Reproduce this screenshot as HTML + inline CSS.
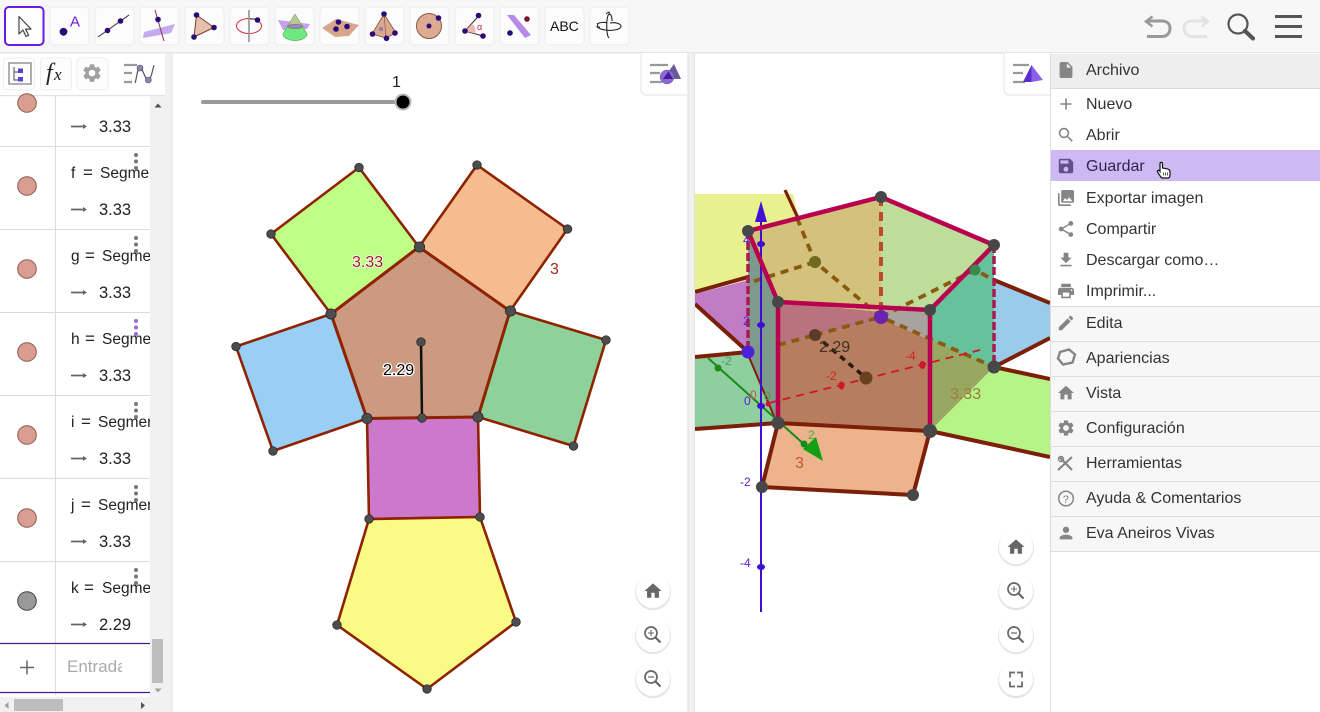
<!DOCTYPE html>
<html lang="es"><head><meta charset="utf-8"><title>GeoGebra</title>
<style>
html,body{margin:0;padding:0;width:1320px;height:712px;overflow:hidden;background:#fff}
svg{display:block}
text{font-family:"Liberation Sans",sans-serif}
.m{font-size:16px;fill:#333}
.a{font-size:15.5px;fill:#222}
.v{font-size:16.500px;fill:#222}
.ic{fill:#858585}
.net{stroke:#8f2200;stroke-width:2.6;stroke-linejoin:round}
.pt{fill:#4d4d4d;stroke:#222;stroke-width:.7}
.e3{stroke:#7c1f08;stroke-width:4;fill:none}
.d3{stroke:#8a5a10;stroke-width:3.8;stroke-dasharray:8 6;fill:none}
.r3{stroke:#b8004f;stroke-width:4.500;fill:none;stroke-linecap:round}
.p3{fill:#474747}
.tb{fill:#fcfcfc;stroke:#ececec;stroke-width:1}
.dot{fill:#2b0a75}
</style></head><body>
<svg width="1320" height="712" viewBox="0 0 1320 712" xmlns="http://www.w3.org/2000/svg">
<defs>
<path id="i-home" d="M10 20v-6h4v6h5v-8h3L12 3 2 12h3v8z"/>
<path id="i-set" d="M19.14 12.94c.04-.3.06-.61.06-.94 0-.32-.02-.64-.07-.94l2.03-1.58c.18-.14.23-.41.12-.61l-1.92-3.32c-.12-.22-.37-.29-.59-.22l-2.39.96c-.5-.38-1.03-.7-1.62-.94l-.36-2.54c-.04-.24-.24-.41-.48-.41h-3.84c-.24 0-.43.17-.47.41l-.36 2.54c-.59.24-1.13.57-1.62.94l-2.39-.96c-.22-.08-.47 0-.59.22L2.74 8.87c-.12.21-.08.47.12.61l2.03 1.58c-.05.3-.09.63-.09.94s.02.64.07.94l-2.03 1.58c-.18.14-.23.41-.12.61l1.92 3.32c.12.22.37.29.59.22l2.39-.96c.5.38 1.03.7 1.62.94l.36 2.54c.05.24.24.41.48.41h3.84c.24 0 .44-.17.47-.41l.36-2.54c.59-.24 1.13-.56 1.62-.94l2.39.96c.22.08.47 0 .59-.22l1.92-3.32c.12-.22.07-.47-.12-.61l-2.01-1.58zM12 15.6c-1.98 0-3.6-1.62-3.6-3.6s1.62-3.6 3.6-3.6 3.6 1.62 3.6 3.6-1.62 3.6-3.6 3.6z"/>
<g id="btn"><circle r="18" fill="#000" opacity=".1" cy="1.2"/><circle r="17" fill="#fff"/></g>
<g id="zin"><circle cx="-2" cy="-2" r="6" fill="none" stroke="#666" stroke-width="1.7"/><path d="M2.4 2.4L7.5 7.5" stroke="#666" stroke-width="2.2"/><path d="M-5-2h6M-2-5v6" stroke="#666" stroke-width="1.1"/></g>
<g id="zout"><circle cx="-2" cy="-2" r="6" fill="none" stroke="#666" stroke-width="1.7"/><path d="M2.4 2.4L7.5 7.5" stroke="#666" stroke-width="2.2"/><path d="M-5-2h6" stroke="#666" stroke-width="1.2"/></g>
<clipPath id="clipA"><rect x="56" y="96" width="94" height="600"/></clipPath>
<clipPath id="clipE"><rect x="60" y="650" width="62" height="35"/></clipPath>
<clipPath id="clip3"><rect x="695" y="96" width="355" height="616"/></clipPath>
</defs>

<!-- toolbar -->
<rect width="1320" height="52" fill="#f7f7f7"/>
<rect y="52" width="1320" height="1.5" fill="#e4e4e4"/>
<g>
<rect class="tb" x="50" y="7" width="39" height="38" rx="4"/><rect class="tb" x="95" y="7" width="39" height="38" rx="4"/><rect class="tb" x="140" y="7" width="39" height="38" rx="4"/><rect class="tb" x="185" y="7" width="39" height="38" rx="4"/><rect class="tb" x="230" y="7" width="39" height="38" rx="4"/><rect class="tb" x="275" y="7" width="39" height="38" rx="4"/><rect class="tb" x="320" y="7" width="39" height="38" rx="4"/><rect class="tb" x="365" y="7" width="39" height="38" rx="4"/><rect class="tb" x="410" y="7" width="39" height="38" rx="4"/><rect class="tb" x="455" y="7" width="39" height="38" rx="4"/><rect class="tb" x="500" y="7" width="39" height="38" rx="4"/><rect class="tb" x="545" y="7" width="39" height="38" rx="4"/><rect class="tb" x="590" y="7" width="39" height="38" rx="4"/>
<rect x="5" y="7" width="38.5" height="38" rx="4" fill="#fff" stroke="#6a1be0" stroke-width="2"/>
<!-- move -->
<path d="M19 16.5V34l4-4 3 6.5 2.6-1.2-3-6.2h5.4z" fill="#fff" stroke="#444" stroke-width="1.2" stroke-linejoin="round"/>
<!-- point -->
<circle cx="63.500" cy="31.800" r="3.900" class="dot"/>
<text x="70" y="26.500" style="font-size:15px;fill:#6a1be0">A</text>
<!-- line -->
<path d="M98 37L129 15" stroke="#333" stroke-width="1"/><circle cx="107.500" cy="30.500" r="2.800" class="dot"/><circle cx="120.500" cy="21" r="2.800" class="dot"/>
<!-- plane with line -->
<path d="M144 32l31-8-4 9-28 5z" fill="#b496ea" opacity=".8"/><path d="M155 10l9 31" stroke="#9a2a55" stroke-width="1"/><circle cx="158" cy="19.500" r="2.800" class="dot"/>
<!-- triangle -->
<path d="M196.500 15L214 27.500 194 37z" fill="#e6bfae" stroke="#7a3d2d" stroke-width="1"/><circle cx="196.500" cy="15" r="2.800" class="dot"/><circle cx="214" cy="27.500" r="2.800" class="dot"/><circle cx="194" cy="37" r="2.800" class="dot"/>
<!-- circle axis -->
<ellipse cx="249" cy="26" rx="12.500" ry="7.500" fill="none" stroke="#d22c3c" stroke-width="1"/><path d="M249 10v32" stroke="#999" stroke-width="1.700"/><path d="M250 19h7" stroke="#333" stroke-width="1"/><circle cx="257.500" cy="20" r="2.800" class="dot"/>
<!-- cone -->
<path d="M278 20l32 4-3 5-24 1z" fill="#b58ae8" opacity=".8"/><path d="M295 14l-12 20a12 6.500 0 0 0 24 0z" fill="#6fe87f" stroke="#55b060" stroke-width=".7"/><path d="M295 14l-6 11h12z" fill="#d9b8a0" opacity=".75"/><ellipse cx="295" cy="26.500" rx="7.500" ry="2.200" fill="#8a70d8" opacity=".75" stroke="#c04050" stroke-width=".7"/>
<!-- plane three points -->
<path d="M322 28l14-9 23 6-10 11-14 1z" fill="#d8a68c"/><circle cx="338.500" cy="22" r="2.800" class="dot"/><circle cx="347" cy="26.500" r="2.800" class="dot"/><circle cx="336" cy="29" r="2.800" class="dot"/>
<!-- pyramid -->
<path d="M384 14l-12 20 14 4 10-5z" fill="#dba98f" stroke="#8a4a33" stroke-width=".8"/><path d="M384 14l2 24" stroke="#8a4a33" stroke-width=".6"/><circle cx="381" cy="29" r="2.300" fill="#9a80a8"/><circle cx="384" cy="14" r="2.800" class="dot"/><circle cx="372.500" cy="34" r="2.800" class="dot"/><circle cx="386.500" cy="38.300" r="2.800" class="dot"/><circle cx="395" cy="33" r="2.800" class="dot"/>
<!-- sphere -->
<circle cx="429" cy="26" r="12.500" fill="#dcab92" stroke="#8a5a45" stroke-width="1"/><circle cx="429" cy="26" r="2.500" class="dot"/><circle cx="438.500" cy="18" r="2.800" class="dot"/>
<!-- angle -->
<path d="M465 31l14.500-16M465 31l18 5" stroke="#333" stroke-width="1"/><path d="M465 31l7-7a8 8 0 0 1 3 9.500z" fill="#f0b8b0"/><text x="477" y="30" style="font-size:9px;fill:#c8203c">α</text><circle cx="465" cy="31" r="2.800" class="dot"/><circle cx="478.500" cy="15.500" r="2.800" class="dot"/><circle cx="483" cy="36" r="2.800" class="dot"/>
<!-- reflect plane -->
<path d="M507 15h7l17 20-6 3z" fill="#b58ae8"/><circle cx="527" cy="19" r="2.800" fill="#6a1a2a"/><circle cx="510" cy="33" r="2.800" class="dot"/>
<!-- ABC -->
<text x="550" y="31" style="font-size:14px;fill:#111">ABC</text>
<!-- rotate -->
<path d="M609 14c-3 3-3 21 0 24M609 14c3 0 3 5 3 7M597 24c3-2 8-2 10-1M610 23c6-1 11 1 11 3 0 4-10 5-16 4-4-.5-7-2-8-4" fill="none" stroke="#222" stroke-width="1.100"/><path d="M606 14l3-2 1 3M600 27l-3 0 1-3" stroke="#222" stroke-width="1" fill="none"/>
<!-- undo redo -->
<path d="M1148 21h14c4 0 8 2 8 7.500s-4 8-8 8h-15" fill="none" stroke="#9a9a9a" stroke-width="3"/><path d="M1152.500 16.500l-6.500 5 6.500 5" fill="none" stroke="#9a9a9a" stroke-width="2.600"/>
<path d="M1206 21h-14c-4 0-8 2-8 7.500s4 8 8 8h15" fill="none" stroke="#e3e3e3" stroke-width="3"/><path d="M1201.500 16.500l6.500 5-6.500 5" fill="none" stroke="#e3e3e3" stroke-width="2.600"/>
<!-- search -->
<circle cx="1238" cy="24" r="9.500" fill="none" stroke="#555" stroke-width="2.200"/><path d="M1245 31l8 7.500" stroke="#555" stroke-width="4.200" stroke-linecap="round"/>
<!-- hamburger -->
<path d="M1275 16.500h27M1275 26.500h27M1275 36.500h27" stroke="#555" stroke-width="3"/>
</g>

<!-- algebra panel -->
<rect y="53.500" width="165" height="41.500" fill="#fff"/>
<rect y="95" width="165" height="1.200" fill="#e2e2e2"/>
<rect x="3.500" y="58" width="31" height="32" rx="4" fill="#fdfdfd" stroke="#eee"/>
<rect x="40.500" y="58" width="31" height="32" rx="4" fill="#fdfdfd" stroke="#eee"/>
<rect x="77" y="58" width="31" height="32" rx="4" fill="#fdfdfd" stroke="#eee"/>
<rect x="9" y="63" width="22" height="21" fill="none" stroke="#8f8f8f" stroke-width="1.400"/>
<path d="M14 67v13h5M14 72h5" fill="none" stroke="#666" stroke-width="1.200"/><rect x="18" y="68.500" width="5" height="4.500" fill="#5b3fd0"/><rect x="18" y="77" width="5" height="4.500" fill="#5b3fd0"/>
<text x="46" y="80" style="font-size:24px;font-style:italic;font-family:'Liberation Serif',serif;fill:#222">f</text><text x="54" y="80" style="font-size:17px;font-style:italic;font-family:'Liberation Serif',serif;fill:#222">x</text>
<g transform="translate(81,62) scale(.92)" fill="#a0a0a0"><use href="#i-set"/></g>
<path d="M124 65h13M124 73h8M124 82h8" stroke="#999" stroke-width="2.200"/><path d="M135 83c2-5 2-15 5-15 3 0 5 12 8 12 3 0 4-8 6-15" fill="none" stroke="#555" stroke-width="1.200"/><circle cx="140" cy="68" r="3" fill="#8c82c0" stroke="#555" stroke-width=".6"/><circle cx="148.300" cy="80" r="3" fill="#8c82c0" stroke="#555" stroke-width=".6"/>

<g stroke="#dcdcdc" stroke-width="1">
<path d="M55.500 96V695"/>
<path d="M0 146.500H150M0 229.500H150M0 312.500H150M0 395.500H150M0 478.500H150M0 561.500H150"/>
</g>
<g fill="#d99e90" stroke="#8a5a50" stroke-width="1"><circle cx="27" cy="103" r="9.300"/><circle cx="27" cy="186" r="9.300"/><circle cx="27" cy="269" r="9.300"/><circle cx="27" cy="352" r="9.300"/><circle cx="27" cy="435" r="9.300"/><circle cx="27" cy="518" r="9.300"/></g>
<circle cx="27" cy="601" r="9.300" fill="#999" stroke="#444"/>
<g clip-path="url(#clipA)">
<text class="a" x="71" y="178">f</text><text class="a" x="100" y="178">Segmento</text>
<text class="a" x="71" y="261">g</text><text class="a" x="102" y="261">Segmento</text>
<text class="a" x="71" y="344">h</text><text class="a" x="102" y="344">Segmento</text>
<text class="a" x="71" y="427">i</text><text class="a" x="98" y="427">Segmento</text>
<text class="a" x="71" y="510">j</text><text class="a" x="98" y="510">Segmento</text>
<text class="a" x="71" y="593">k</text><text class="a" x="102" y="593">Segmento</text>
<text class="a" x="83" y="178" style="font-size:17px">=</text>
<text class="a" x="85" y="261" style="font-size:17px">=</text>
<text class="a" x="85" y="344" style="font-size:17px">=</text>
<text class="a" x="81" y="427" style="font-size:17px">=</text>
<text class="a" x="81" y="510" style="font-size:17px">=</text>
<text class="a" x="84" y="593" style="font-size:17px">=</text>
</g>
<g stroke="#666" stroke-width="1.700" fill="#666">
<path d="M71 126.500h14M71 209.500h14M71 292.500h14M71 375.500h14M71 458.500h14M71 541.500h14M71 624.500h14"/>
</g>
<g fill="#666"><path d="M83 124l4 2.500-4 2.500zM83 207l4 2.500-4 2.500zM83 290l4 2.500-4 2.500zM83 373l4 2.500-4 2.500zM83 456l4 2.500-4 2.500zM83 539l4 2.500-4 2.500zM83 622l4 2.500-4 2.500z"/></g>
<g>
<text class="v" x="99" y="132">3.33</text><text class="v" x="99" y="215">3.33</text><text class="v" x="99" y="298">3.33</text><text class="v" x="99" y="381">3.33</text><text class="v" x="99" y="464">3.33</text><text class="v" x="99" y="547">3.33</text><text class="v" x="99" y="630">2.29</text>
</g>
<g fill="#777"><circle cx="136" cy="155" r="2"/><circle cx="136" cy="161.500" r="2"/><circle cx="136" cy="168" r="2"/><circle cx="136" cy="238" r="2"/><circle cx="136" cy="244.500" r="2"/><circle cx="136" cy="251" r="2"/><circle cx="136" cy="404" r="2"/><circle cx="136" cy="410.500" r="2"/><circle cx="136" cy="417" r="2"/><circle cx="136" cy="487" r="2"/><circle cx="136" cy="493.500" r="2"/><circle cx="136" cy="500" r="2"/><circle cx="136" cy="570" r="2"/><circle cx="136" cy="576.500" r="2"/><circle cx="136" cy="583" r="2"/></g>
<g fill="#9a6ad8"><circle cx="136" cy="321" r="2"/><circle cx="136" cy="327.500" r="2"/><circle cx="136" cy="334" r="2"/></g>
<path d="M0 643.500H150M0 692.500H150" stroke="#4a1a8c" stroke-width="1.300"/>
<path d="M55.500 644V692" stroke="#dcdcdc"/>
<path d="M20 667.500h14M27 660.500v14" stroke="#666" stroke-width="1.500"/>
<g clip-path="url(#clipE)"><text x="67" y="672" style="font-size:17px;fill:#aaa">Entrada</text></g>
<!-- scrollbars -->
<rect x="150" y="96" width="15" height="616" fill="#f1f1f1"/>
<rect y="697" width="150" height="15" fill="#f1f1f1"/>
<rect x="152" y="639" width="11" height="44" fill="#bdbdbd"/>
<rect x="14" y="699" width="49" height="12" fill="#bdbdbd"/>
<path d="M154.500 107.500l3.500-4 3.500 4z" fill="#505050"/><path d="M154.500 688.500l3.500 4 3.500-4z" fill="#a0a0a0"/>
<path d="M8.500 702l-4 3.500 4 3.500z" fill="#a0a0a0"/><path d="M141 702l4 3.500-4 3.500z" fill="#505050"/>
<!-- splitters -->
<rect x="165" y="53" width="7" height="659" fill="#f1f1f1"/><rect x="171.500" y="53" width="1" height="659" fill="#e2e2e2"/>
<rect x="687.500" y="53" width="7.500" height="659" fill="#f1f1f1"/><rect x="687.500" y="53" width="1" height="659" fill="#dedede"/><rect x="694" y="53" width="1" height="659" fill="#e2e2e2"/>

<!-- 2D -->
<rect x="201" y="100" width="202" height="4" rx="2" fill="#999"/>
<circle cx="403" cy="102" r="8.500" fill="#bbb"/><circle cx="403" cy="102" r="6.500" fill="#000"/>
<text x="392" y="87" style="font-size:16px;fill:#222">1</text>
<g class="net">
<polygon points="331,314 419,247 359,167.500 271,234" fill="#bfff87"/>
<polygon points="419,247 510,311 567.500,229 477,165" fill="#f5bc8f"/>
<polygon points="510,311 478,417 573.500,446 606,340" fill="#8fd19a"/>
<polygon points="331,314 367,418.500 273,451 236,346.500" fill="#99cff5"/>
<polygon points="367,418.500 478,417 480,517 369,519" fill="#cc79cc"/>
<polygon points="369,519 480,517 516,622 427,689 337,625" fill="#f9fb86"/>
<polygon points="419,247 510,311 478,417 367,418.500 331,314" fill="#cb9a80" stroke-width="3"/>
</g>
<path d="M421 342L422 418" stroke="#111" stroke-width="2.500"/>
<g class="pt"><circle cx="359" cy="167.500" r="4.300"/><circle cx="271" cy="234" r="4.300"/><circle cx="477" cy="165" r="4.300"/><circle cx="567.500" cy="229" r="4.300"/><circle cx="606" cy="340" r="4.300"/><circle cx="573.500" cy="446" r="4.300"/><circle cx="236" cy="346.500" r="4.300"/><circle cx="273" cy="451" r="4.300"/><circle cx="369" cy="519" r="4.300"/><circle cx="480" cy="517" r="4.300"/><circle cx="516" cy="622" r="4.300"/><circle cx="427" cy="689" r="4.300"/><circle cx="337" cy="625" r="4.300"/><circle cx="421" cy="342" r="4.300"/><circle cx="422" cy="418" r="4.300"/>
<circle cx="419.500" cy="247" r="5.200"/><circle cx="510.500" cy="311" r="5.200"/><circle cx="478" cy="417" r="5.200"/><circle cx="367" cy="418.500" r="5.200"/><circle cx="331" cy="314" r="5.200"/></g>
<text x="352" y="267" style="font-size:16px;fill:#a0162e;paint-order:stroke;stroke:#fff;stroke-width:1.500px">3.33</text>
<text x="550" y="274" style="font-size:16px;fill:#a02a18">3</text>
<text x="383" y="375" style="font-size:16px;fill:#000;paint-order:stroke;stroke:#fff;stroke-width:2.500px">2.29</text>
<!-- 2D style tab -->
<path d="M641 53v37a5 5 0 0 0 5 5h41V53z" fill="#fff"/><path d="M641 53v37a5 5 0 0 0 5 5h41" fill="none" stroke="#e6e6e6"/>
<path d="M650 65h18M650 73h10M650 82h12" stroke="#999" stroke-width="2.300"/>
<path d="M674 64l-11 15h18z" fill="#6a5a9a"/><circle cx="667" cy="77" r="6.800" fill="#8a68d8" stroke="#6a5a9a" stroke-width=".6"/><path d="M668.500 71.500l-5.500 7.500h10z" fill="#4a1a9a"/>
<g><use href="#btn" x="653" y="591"/><use href="#btn" x="653" y="635"/><use href="#btn" x="653" y="679"/></g>
<g transform="translate(642.800,580.800) scale(.85)" fill="#666"><use href="#i-home"/></g>
<use href="#zin" x="653" y="635"/><use href="#zout" x="653" y="679"/>

<!-- 3D -->
<g clip-path="url(#clip3)">
<polygon points="695,194 793,194 800,222 748,233 748,280 695,292" fill="#e9f090"/>
<polygon points="695,294 748,280 748,352 695,304" fill="#c07cc4"/>
<polygon points="695,359 748,353 778,423 695,429" fill="#8fcf9f"/>
<polygon points="994,280 1050,303 1050,338 994,367" fill="#9bcbea"/>
<polygon points="994,367 1050,379 1050,456 930,431" fill="#b6f488"/>
<polygon points="778,423 930,431 913,495 762,487" fill="#edb38d"/>
<path d="M695 292L748 277M695 304L748 352M695 357L748 352 778 423M695 429L778 423 762 487 913 495 930 431M994 367L1050 379M994 367L1050 338M994 280L1050 303M930 431L1050 457" class="e3"/>
<path d="M785 190L798 218" stroke="#7c1f08" stroke-width="3.200"/>
<!-- inner faces -->
<polygon points="748,231 881,197 881,317 778,302" fill="#d3c27b"/>
<polygon points="881,197 994,245 930,310 881,305" fill="#bfdd9a"/>
<polygon points="881,305 930,310 930,340 884,320" fill="#a9a39f"/>
<polygon points="748,231 778,302 778,423 748,352" fill="#7e9a8d"/>
<polygon points="778,302 881,312 884,320 815,335 778,345" fill="#b8737e"/>
<polygon points="778,345 815,335 884,320 930,340 930,431 778,423" fill="#b67e5e"/>
<polygon points="930,310 994,245 994,367 930,345" fill="#66c29b"/>
<polygon points="930,339 994,367 930,431" fill="#98a860"/>
<!-- hidden dashes -->
<path class="d3" d="M797 218L815 262 881,317 994,367M815 262L748 283M815 335L881,317M778 345L815 335M881 317L975 270 994 280"/>
<path d="M881 197V317" stroke="#bd4a2e" stroke-width="4" stroke-dasharray="9 6"/>
<path d="M748 231V352M994 245V367" stroke="#a81a50" stroke-width="3.500" stroke-dasharray="8 3"/>
<path d="M815 335L866 378" stroke="#2a1a10" stroke-width="3.500" stroke-dasharray="6 5"/>
<path d="M778 423L930 431" stroke="#7c1f08" stroke-width="4"/>
<!-- axes -->
<path d="M769 403L980 350" stroke="#d0142c" stroke-width="1.800" stroke-dasharray="8 6"/>
<path d="M708 358L816 455" stroke="#1a8a1a" stroke-width="2"/>
<path d="M823 461L803 449 816 437z" fill="#12a012"/>
<path d="M761 205V612" stroke="#3d10d0" stroke-width="2"/>
<path d="M761 201L755 222H767z" fill="#4410d8"/>
<!-- prism edges -->
<path class="r3" d="M748 231L881 197 994 245 930 310 778 302 748 231M778 302V423M930 310V431"/>
<!-- ticks -->
<g fill="#3d10d0"><ellipse cx="761" cy="244" rx="4" ry="3"/><ellipse cx="761" cy="325" rx="4" ry="3"/><ellipse cx="761" cy="406" rx="4" ry="3"/><ellipse cx="761" cy="567" rx="4" ry="3"/></g>
<g fill="#d0142c"><ellipse cx="841.500" cy="385.500" rx="3" ry="4"/><ellipse cx="922.500" cy="365" rx="3" ry="4"/><circle cx="768" cy="404" r="2.500"/></g>
<g fill="#1a8a1a"><circle cx="718" cy="368" r="3.500"/><circle cx="804" cy="444" r="3.500"/></g>
<!-- points -->
<g class="p3"><circle cx="748" cy="231" r="6"/><circle cx="881" cy="197" r="6"/><circle cx="994" cy="245" r="6"/><circle cx="778" cy="302" r="6"/><circle cx="930" cy="310" r="6"/><circle cx="778" cy="423" r="6.500"/><circle cx="930" cy="431" r="7"/><circle cx="994" cy="367" r="6.500"/><circle cx="762" cy="487" r="6"/><circle cx="913" cy="495" r="6"/></g>
<circle cx="815" cy="262" r="6" fill="#6e6a20"/><circle cx="815" cy="335" r="6" fill="#5a3a28"/><circle cx="866" cy="378" r="6.500" fill="#6a4020"/><circle cx="975" cy="270" r="5.500" fill="#3a8a50"/>
<circle cx="881" cy="317" r="7" fill="#6a22b0"/><circle cx="748" cy="352" r="6.500" fill="#4a22d8"/>
<!-- labels -->
<g>
<text x="743" y="244" style="font-size:12px;fill:#5a20d0">4</text>
<text x="743" y="325" style="font-size:12px;fill:#5a20d0">2</text>
<text x="744" y="405" style="font-size:12px;fill:#5a20d0">0</text>
<text x="740" y="486" style="font-size:12px;fill:#5a20d0">-2</text>
<text x="740" y="567" style="font-size:12px;fill:#5a20d0">-4</text>
<text x="750" y="399" style="font-size:12px;fill:#d05050">0</text>
<text x="826" y="380" style="font-size:12px;fill:#d82020">-2</text>
<text x="905" y="360" style="font-size:12px;fill:#d82020">-4</text>
<text x="808" y="439" style="font-size:12px;fill:#40b040">2</text>
<text x="721" y="365" style="font-size:12px;fill:#40a060">-2</text>
<text x="764" y="400" style="font-size:12px;fill:#40a040">0</text>
</g>
<text x="795" y="468" style="font-size:16px;fill:#c8582a">3</text>
<text x="819" y="352" style="font-size:16px;fill:#3f3026">2.29</text>
<text x="950" y="399" style="font-size:16px;fill:#a07a3a">3.33</text>
</g>
<!-- 3D style tab -->
<path d="M1004 53v37a5 5 0 0 0 5 5h41V53z" fill="#fff"/><path d="M1004 53v37a5 5 0 0 0 5 5h41" fill="none" stroke="#e6e6e6"/>
<path d="M1013 65h16M1013 73h10M1013 82h12" stroke="#999" stroke-width="2.300"/><path d="M1031.500 65l-8.500 17 8.500 0z" fill="#5a30c8"/><path d="M1031.500 65l11.500 15-11.500 2z" fill="#8a60e8"/>
<g><use href="#btn" x="1016" y="547"/><use href="#btn" x="1016" y="591"/><use href="#btn" x="1016" y="635"/><use href="#btn" x="1016" y="679"/></g>
<g transform="translate(1005.800,536.800) scale(.85)" fill="#666"><use href="#i-home"/></g>
<use href="#zin" x="1016" y="591"/><use href="#zout" x="1016" y="635"/>
<path d="M1010 677v-5h5M1017 672h5v5M1022 681v5h-5M1015 686h-5v-5" fill="none" stroke="#666" stroke-width="1.700" transform="translate(0,.5)"/>

<!-- menu -->
<rect x="1050" y="53" width="270" height="659" fill="#fff"/>
<rect x="1050" y="53" width="1" height="659" fill="#dcdcdc"/>
<rect x="1051" y="54" width="269" height="34" fill="#eeeeee"/><rect x="1051" y="88" width="269" height="1" fill="#dcdcdc"/>
<rect x="1051" y="150" width="269" height="31" fill="#cdb9f4"/>
<rect x="1051" y="306" width="269" height="245" fill="#f7f7f7"/>
<path d="M1051 306.500H1320M1051 341.500H1320M1051 376.500H1320M1051 411.500H1320M1051 446.500H1320M1051 481.500H1320M1051 516.500H1320M1051 551.500H1320" stroke="#dedede"/>
<g>
<text class="m" x="1086" y="75">Archivo</text>
<text class="m" x="1086" y="109">Nuevo</text>
<text class="m" x="1086" y="140">Abrir</text>
<text x="1086" y="171" style="font-size:16px;fill:#33224f">Guardar</text>
<text class="m" x="1086" y="203">Exportar imagen</text>
<text class="m" x="1086" y="234">Compartir</text>
<text class="m" x="1086" y="265">Descargar como…</text>
<text class="m" x="1086" y="296">Imprimir...</text>
<text class="m" x="1086" y="328">Edita</text>
<text class="m" x="1086" y="363">Apariencias</text>
<text class="m" x="1086" y="398">Vista</text>
<text class="m" x="1086" y="433">Configuración</text>
<text class="m" x="1086" y="468">Herramientas</text>
<text class="m" x="1086" y="503">Ayuda &amp; Comentarios</text>
<text class="m" x="1086" y="538">Eva Aneiros Vivas</text>
</g>
<g class="ic">
<path transform="translate(1056.400,60.400) scale(.8)" d="M6 2c-1.100 0-1.990.900-1.990 2L4 20c0 1.100.890 2 1.990 2H18c1.100 0 2-.900 2-2V8l-6-6H6zm7 7V3.500L18.500 9H13z"/>
<path transform="translate(1056.400,94.400) scale(.8)" d="M19 13h-6v6h-2v-6H5v-2h6V5h2v6h6v2z"/>
<path transform="translate(1056.400,125.400) scale(.8)" d="M15.500 14h-.790l-.280-.270C15.410 12.590 16 11.110 16 9.500 16 5.910 13.090 3 9.500 3S3 5.910 3 9.500 5.910 16 9.500 16c1.610 0 3.090-.590 4.230-1.570l.270.280v.790l5 4.990L20.490 19l-4.990-5zm-6 0C7.010 14 5 11.990 5 9.500S7.010 5 9.500 5 14 7.010 14 9.500 11.990 14 9.500 14z"/>
<path transform="translate(1056.400,156.400) scale(.8)" style="fill:#64518a" d="M17 3H5c-1.110 0-2 .900-2 2v14c0 1.100.890 2 2 2h14c1.100 0 2-.900 2-2V7l-4-4zm-5 16c-1.660 0-3-1.340-3-3s1.340-3 3-3 3 1.340 3 3-1.340 3-3 3zm3-10H5V5h10v4z"/>
<path transform="translate(1056.400,188.400) scale(.8)" d="M22 16V4c0-1.100-.900-2-2-2H8c-1.100 0-2 .900-2 2v12c0 1.100.900 2 2 2h12c1.100 0 2-.900 2-2zm-11-4l2.030 2.710L16 11l4 5H8l3-4zM2 6v14c0 1.100.900 2 2 2h14v-2H4V6H2z"/>
<path transform="translate(1056.400,219.400) scale(.8)" d="M18 16.080c-.760 0-1.440.300-1.960.770L8.910 12.700c.050-.230.090-.460.090-.700s-.040-.470-.090-.700l7.050-4.110c.540.500 1.250.810 2.040.810 1.660 0 3-1.340 3-3s-1.340-3-3-3-3 1.340-3 3c0 .240.040.470.090.700L8.040 9.810C7.500 9.310 6.790 9 6 9c-1.660 0-3 1.340-3 3s1.340 3 3 3c.790 0 1.500-.310 2.040-.810l7.120 4.160c-.050.210-.080.430-.080.650 0 1.610 1.310 2.920 2.920 2.920 1.610 0 2.920-1.310 2.920-2.920s-1.310-2.920-2.920-2.920z"/>
<path transform="translate(1056.400,250.400) scale(.8)" d="M19 9h-4V3H9v6H5l7 7 7-7zM5 18v2h14v-2H5z"/>
<path transform="translate(1056.400,281.400) scale(.8)" d="M19 8H5c-1.660 0-3 1.340-3 3v6h4v4h12v-4h4v-6c0-1.660-1.340-3-3-3zm-3 11H8v-5h8v5zm3-7c-.550 0-1-.450-1-1s.450-1 1-1 1 .450 1 1-.450 1-1 1zm-1-9H6v4h12V3z"/>
<path transform="translate(1056.400,313.400) scale(.8)" d="M3 17.250V21h3.750L17.810 9.940l-3.750-3.750L3 17.250zM20.710 7.040c.390-.390.390-1.020 0-1.410l-2.340-2.340c-.390-.390-1.020-.390-1.410 0l-1.830 1.830 3.750 3.750 1.830-1.830z"/>
<path d="M1060 352l9-2.500 6 5-2.500 8-9.500 2-5-6z" fill="none" stroke="#858585" stroke-width="2.400"/>
<g transform="translate(1056.400,383.400) scale(.8)"><use href="#i-home"/></g>
<g transform="translate(1056.400,418.400) scale(.8)"><use href="#i-set"/></g>
<path d="M1060 457.500l12 12.500M1072 457l-14 13" stroke="#858585" stroke-width="2.200"/><circle cx="1061" cy="459" r="2.500" fill="none" stroke="#858585" stroke-width="1.500"/>
<circle cx="1066" cy="498.500" r="7.300" fill="none" stroke="#858585" stroke-width="1.500"/><text x="1062.800" y="503" style="font-size:11px;fill:#858585">?</text>
<path transform="translate(1056.400,523.400) scale(.8)" d="M12 12c2.210 0 4-1.790 4-4s-1.790-4-4-4-4 1.790-4 4 1.790 4 4 4zm0 2c-2.670 0-8 1.340-8 4v2h16v-2c0-2.660-5.330-4-8-4z"/>
</g>
<!-- hand cursor -->
<path d="M1160 163.500c0-1.500 2.500-1.500 2.500 0v4.500l4.500.8c2 .4 3 1 3 3v3.500c0 1.500-1 2.700-2 2.700h-5.500c-1 0-1.500-.7-2-1.500l-3-4.500c-.7-1.300 1-2.300 2-1.200l.5.700z" fill="#fff" stroke="#111" stroke-width="1.200"/>
<path d="M1163.500 172.500v3M1165.500 172.500v3M1167.500 172.500v3" stroke="#111" stroke-width=".7"/>
</svg>
</body></html>
